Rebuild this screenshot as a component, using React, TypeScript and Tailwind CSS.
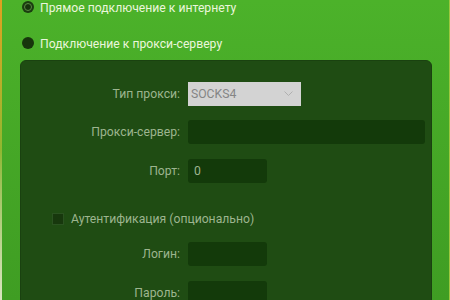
import React from "react";

const font = { fontFamily: 'Roboto, "Noto Sans", sans-serif' };

function Row({ label, children, className }: { label: string; children: React.ReactNode; className?: string }) {
  return (
    <div className={"flex items-center " + (className ?? "")}>
      <div className="w-[167px] pr-[8px] text-right text-[12.2px] text-[#9db58f] leading-none">{label}</div>
      {children}
    </div>
  );
}

export default function App() {
  return (
    <div
      className="relative w-[450px] h-[300px] overflow-hidden bg-gradient-to-b from-[#4cb22a] to-[#3f9d23]"
      style={font}
    >
      <div className="absolute left-0 top-0 h-full w-[2px] bg-gradient-to-b from-[#e0a020] via-[#8fb830] to-[#d8e4c0]" />
      <div className="absolute right-0 top-0 h-full w-[1px] bg-[#9cc840]" />
      <div className="flex flex-col pl-[22px] pt-[1px]">
        <div className="flex items-center h-[12px]">
          <div className="w-[12px] h-[12px] rounded-full bg-[#1b3d10] flex items-center justify-center">
            <div className="w-[8px] h-[8px] rounded-full border border-[#5b8a45] bg-[#16330c]" />
          </div>
          <span className="ml-[6px] mt-[2px] text-[12.2px] text-[#eaf6dc] leading-none">Прямое подключение к интернету</span>
        </div>
        <div className="flex items-center h-[12px] mt-[24px]">
          <div className="w-[12px] h-[12px] rounded-full bg-[#17360c]" />
          <span className="ml-[6px] mt-[2px] text-[12.2px] text-[#eaf6dc] leading-none">Подключение к прокси-серверу</span>
        </div>
      </div>
      <div className="ml-[20px] mt-[11px] w-[412px] h-[260px] rounded-[6px] bg-[#1f4c13] border border-[#1a4210] flex flex-col pt-[21px]">
        <Row label="Тип прокси:">
          <div className="w-[113px] h-[24px] bg-[#d3d3d3] flex items-center justify-between pl-[3px] pr-[8px]">
            <span className="text-[12.2px] text-[#858585]">SOCKS4</span>
            <svg width="9" height="6" viewBox="0 0 9 6" fill="none">
              <path d="M0.5 0.5 L4.5 4.5 L8.5 0.5" stroke="#b0b0b0" strokeWidth="1" />
            </svg>
          </div>
        </Row>
        <Row label="Прокси-сервер:" className="mt-[14px]">
          <div className="w-[237px] h-[24px] rounded-[3px] bg-[#133a0a]" />
        </Row>
        <Row label="Порт:" className="mt-[15px]">
          <div className="w-[79px] h-[24px] rounded-[3px] bg-[#133a0a] flex items-center pl-[6px]">
            <span className="text-[12.2px] text-[#9db58f]">0</span>
          </div>
        </Row>
        <div className="flex items-center ml-[31px] mt-[30px]">
          <div className="w-[12px] h-[12px] bg-[#17380d] border border-[#2a5220]" />
          <span className="ml-[7px] text-[12.2px] text-[#9db58f] leading-none">Аутентификация (опционально)</span>
        </div>
        <Row label="Логин:" className="mt-[17px]">
          <div className="w-[79px] h-[24px] rounded-[3px] bg-[#133a0a]" />
        </Row>
        <Row label="Пароль:" className="mt-[15px]">
          <div className="w-[79px] h-[24px] rounded-[3px] bg-[#133a0a]" />
        </Row>
      </div>
    </div>
  );
}
